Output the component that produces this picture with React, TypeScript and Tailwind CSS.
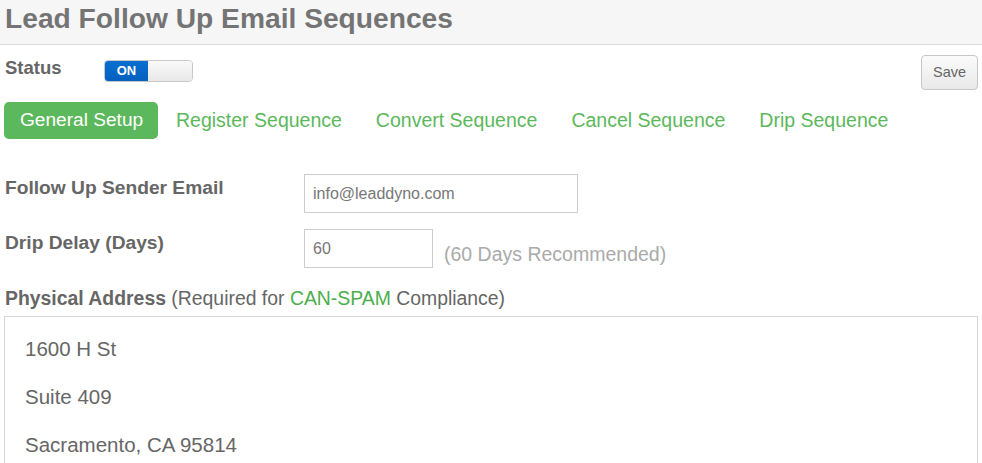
export default function App() {
  const tabs = ["Register Sequence", "Convert Sequence", "Cancel Sequence", "Drip Sequence"];
  return (
    <div className="w-[982px] h-[463px] overflow-hidden bg-white font-['Liberation_Sans',Arial,sans-serif] text-[#555]">
      <div className="h-[45px] bg-[#f6f6f6] border-b border-[#dcdcdc] pl-[5px] pt-[1px]">
        <h1 className="text-[28.2px] font-bold text-[#747474] leading-[34px]">Lead Follow Up Email Sequences</h1>
      </div>

      <div className="flex items-start pl-[5px] pr-[4px] pt-[10px]">
        <span className="text-[18.5px] font-bold text-[#666] w-[99px] leading-[26px]">Status</span>
        <div className="mt-[5px] flex h-[22px] w-[89px] rounded-[4px] border border-[#c8c8c8] overflow-hidden">
          <div className="w-[43px] flex items-center justify-center bg-gradient-to-b from-[#0a6fd0] to-[#0560be] text-white text-[13px] font-bold">ON</div>
          <div className="flex-1 bg-gradient-to-b from-[#fafafa] to-[#e8e8e8]" />
        </div>
        <button className="ml-auto h-[35px] w-[57px] rounded-[4px] border border-[#c6c6c6] bg-gradient-to-b from-[#fbfbfb] to-[#e9e9e9] text-[14.5px] text-[#666]">Save</button>
      </div>

      <div className="flex items-center pl-[4px] mt-[12px]">
        <div className="h-[37px] w-[154px] pl-[16px] mr-[1px] flex items-center rounded-[5px] bg-[#5cb85c] text-white text-[19.1px]">General Setup</div>
        {tabs.map((t) => (
          <div key={t} className="px-[17px] text-[19.5px] text-[#5cb85c]">{t}</div>
        ))}
      </div>

      <div className="pl-[5px] pt-[35px] flex flex-col gap-[16px]">
        <div className="flex items-start">
          <span className="w-[299px] text-[19.2px] font-bold text-[#666]">Follow Up Sender Email</span>
          <div className="h-[39px] w-[274px] border border-[#ccc] flex items-center px-[8px] text-[16px] text-[#777]">info@leaddyno.com</div>
        </div>
        <div className="flex items-start">
          <span className="w-[299px] text-[19.2px] font-bold text-[#666]">Drip Delay (Days)</span>
          <div className="h-[39px] w-[129px] border border-[#ccc] flex items-center px-[8px] text-[16px] text-[#777]">60</div>
          <span className="ml-[11px] mt-[11px] text-[19.5px] text-[#aaa]">(60 Days Recommended)</span>
        </div>
      </div>

      <div className="pl-[5px] pt-[15px] text-[19.4px] text-[#666]">
        <span className="font-bold">Physical Address</span> (Required for <span className="text-[#4cae4c]">CAN-SPAM</span> Compliance)
      </div>

      <div className="ml-[4px] mr-[4px] mt-[3px] border border-[#d6d6d6] pl-[20px] pt-[20px] flex flex-col gap-[25px] text-[20.5px] leading-[23px] text-[#666] h-[200px]">
        <div>1600 H St</div>
        <div>Suite 409</div>
        <div>Sacramento, CA 95814</div>
      </div>
    </div>
  );
}
